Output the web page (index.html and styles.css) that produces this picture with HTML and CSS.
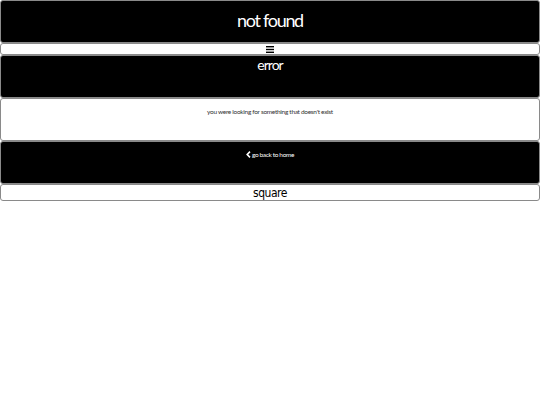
FILE: index.html
```html
<!DOCTYPE html>
<html>
<head>
<meta charset="utf-8">
<link rel="stylesheet" href="styles.css">
</head>
<body>
<div class="page">
  <header class="box dark title"><h1>not found</h1></header>
  <nav class="box light menu">
    <svg class="burger" width="8" height="7" viewBox="0 0 8 7"><rect x="0" y="0" width="8" height="1.4" fill="#000"/><rect x="0" y="2.8" width="8" height="1.4" fill="#000"/><rect x="0" y="5.6" width="8" height="1.4" fill="#000"/></svg>
  </nav>
  <section class="box dark block"><h2>error</h2></section>
  <section class="box light block"><p class="msg">you were looking for something that doesn't exist</p></section>
  <section class="box dark block"><a class="back" href="#"><svg width="5" height="7" viewBox="0 0 5 7"><path d="M4 0.6 L1.2 3.5 L4 6.4" fill="none" stroke="#fff" stroke-width="1.6"/></svg>go back to home</a></section>
  <footer class="box light foot">square</footer>
</div>
</body>
</html>
```
FILE: styles.css
```css
html, body { margin: 0; padding: 0; background: #fff; }
body { font-family: Lato, "Open Sans", sans-serif; }
.page { display: flex; flex-direction: column; width: 540px; }
.box { box-sizing: border-box; border: 1px solid #8a8a8a; border-radius: 3px; text-align: center; }
.dark { background: #000; color: #fff; }
.light { background: #fff; color: #000; }
.title { height: 43px; display: flex; align-items: center; justify-content: center; padding-bottom: 3px; }
.title h1 { margin: 0; font-size: 18px; font-weight: normal; letter-spacing: -1.3px; }
.menu { height: 12px; display: flex; align-items: center; justify-content: center; }
.block { height: 43px; }
.block h2 { margin: 0; padding-top: 1px; font-size: 14px; font-weight: normal; letter-spacing: -1px; line-height: 16px; }
.msg { margin: 0; padding-top: 8px; font-size: 6.5px; color: #333; line-height: 9px; letter-spacing: -0.3px; }
.back { display: inline-flex; align-items: center; gap: 1px; margin-top: 8px; font-size: 6.5px; color: #fff; text-decoration: none; line-height: 9px; letter-spacing: -0.35px; }
.foot { height: 17px; font-family: "DejaVu Sans Condensed", "DejaVu Sans", sans-serif; font-size: 12px; line-height: 17px; letter-spacing: -0.5px; }
```
